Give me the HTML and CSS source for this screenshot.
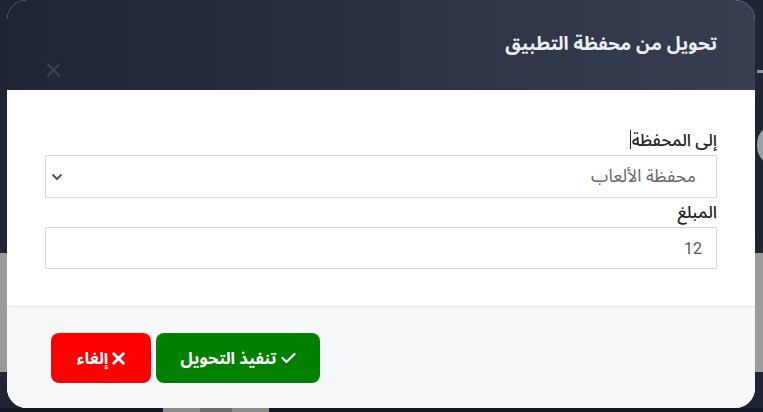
FILE: index.html
```html
<!DOCTYPE html>
<html lang="ar" dir="rtl">
<head>
  <meta charset="UTF-8" />
  <meta name="viewport" content="width=device-width, initial-scale=1" />
  <title>تحويل من محفظة التطبيق</title>
  <link rel="stylesheet" href="styles.css">
</head>
<body>
  <div class="page">
    <div class="page-top">
      <span class="page-mark"></span>
      <span class="page-dot"></span>
    </div>
    <div class="page-band"></div>
    <div class="page-rest"></div>
    <div class="page-foot">
      <span class="page-chip"></span>
      <span class="page-chip dim"></span>
      <span class="page-chip"></span>
    </div>
  </div>

  <div class="modal">
    <div class="modal-header">
      <h5 class="modal-title">تحويل من محفظة التطبيق</h5>
      <button class="btn-close" type="button" aria-label="إغلاق">
        <svg width="15" height="14" viewBox="0 0 15 14">
          <path d="M2 1.5 L13 12.5 M13 1.5 L2 12.5" stroke="#3a4252" stroke-width="2.4" stroke-linecap="round"/>
        </svg>
      </button>
    </div>

    <div class="modal-body">
      <div class="field">
        <label class="field-label">إلى المحفظة<span class="caret"></span></label>
        <div class="select-wrap">
          <select class="field-input">
            <option>محفظة الألعاب</option>
          </select>
          <svg class="chevron" width="12" height="8" viewBox="0 0 12 8">
            <path d="M1.5 1.5 L6 6 L10.5 1.5" fill="none" stroke="#555" stroke-width="2"/>
          </svg>
        </div>
      </div>
      <div class="field">
        <label class="field-label">المبلغ</label>
        <input class="field-input amount" type="text" value="12">
      </div>
    </div>

    <div class="modal-footer">
      <button class="btn btn-ok" type="button">
        <svg class="icon" width="15" height="12" viewBox="0 0 15 12">
          <path d="M1.5 6 L5.5 10 L13.5 2" fill="none" stroke="#fff" stroke-width="2.2" stroke-linecap="round" stroke-linejoin="round"/>
        </svg>
        تنفيذ التحويل
      </button>
      <button class="btn btn-cancel" type="button">
        <svg class="icon" width="13" height="13" viewBox="0 0 13 13">
          <path d="M1.7 1.7 L11.3 11.3 M11.3 1.7 L1.7 11.3" stroke="#fff" stroke-width="2.8" stroke-linecap="round"/>
        </svg>
        إلغاء
      </button>
    </div>
  </div>
</body>
</html>
```

FILE: styles.css
```css
body {
  margin: 0;
  font-family: "Noto Sans Arabic", "Noto Sans", sans-serif;
  background: #1f2532;
  height: 412px;
  overflow: hidden;
}

/* page behind the dialog */
.page {
  display: flex;
  flex-direction: column;
  height: 412px;
}

.page-top {
  height: 253px;
  position: relative;
}

.page-mark {
  position: absolute;
  left: 757px;
  top: 70px;
  width: 6px;
  height: 3px;
  background: #8f96a3;
}

.page-dot {
  position: absolute;
  left: 757px;
  top: 128px;
  width: 22px;
  height: 34px;
  border-radius: 50%;
  background: #9aa0a8;
}

.page-band {
  height: 119px;
  background: #9b9b9b;
}

.page-rest {
  height: 36px;
}

.page-foot {
  flex: 1;
  background: #111827;
  display: flex;
  direction: ltr;
  padding-left: 163px;
}

.page-chip {
  width: 37px;
  background: #8a8a8a;
}

.page-chip.dim {
  background: #6d6d6d;
  width: 32px;
}

/* dialog */
.modal {
  position: fixed;
  top: 0;
  left: 7px;
  width: 748px;
  height: 408px;
  border-radius: 20px;
  overflow: hidden;
  background: #fff;
  display: flex;
  flex-direction: column;
}

.modal-header {
  height: 90px;
  box-sizing: border-box;
  padding: 0 38px;
  background: linear-gradient(to right, #1f2736, #363e50);
  position: relative;
}

.modal-title {
  margin: 0;
  padding-top: 30px;
  color: #eceef2;
  font-size: 18.7px;
  font-weight: bold;
  line-height: 28px;
}

.btn-close {
  position: absolute;
  left: 39px;
  top: 63px;
  border: 0;
  background: none;
  padding: 0;
  display: flex;
}

.modal-body {
  flex: 1;
  padding: 39px 38px 0;
}

.field + .field {
  margin-top: 3px;
}

.field-label {
  display: block;
  font-size: 17px;
  font-weight: 500;
  color: #222;
  line-height: 24px;
  margin-bottom: 2px;
}

.caret {
  display: inline-block;
  width: 1px;
  height: 19px;
  background: #222;
  vertical-align: -3px;
  margin-right: 1px;
}

.select-wrap {
  position: relative;
}

.field-input {
  display: block;
  width: 100%;
  height: 43px;
  box-sizing: border-box;
  border: 1px solid #d5d8de;
  border-radius: 0;
  background: #fff;
  font-family: inherit;
  font-size: 17.5px;
  font-weight: 400;
  color: #666;
  padding: 0 20px;
  appearance: none;
  outline: none;
}

.field-input.amount {
  height: 42px;
  font-family: Roboto, sans-serif;
  font-size: 16px;
  color: #555;
  padding: 0 14px;
}

.chevron {
  position: absolute;
  left: 6px;
  top: 18px;
}

.modal-footer {
  height: 102px;
  box-sizing: border-box;
  border-top: 1px solid #dde6f3;
  background: #f7f8fa;
  display: flex;
  justify-content: flex-end;
  align-items: flex-start;
  gap: 5px;
  padding: 26px 44px 0;
}

.btn {
  height: 50px;
  border: 0;
  border-radius: 8px;
  color: #fff;
  font-family: inherit;
  font-size: 16.5px;
  font-weight: bold;
  display: flex;
  align-items: center;
  justify-content: center;
  gap: 4px;
}

.btn-ok {
  width: 164px;
  background: #008000;
}

.btn-cancel {
  width: 100px;
  background: #ff0000;
}
```
